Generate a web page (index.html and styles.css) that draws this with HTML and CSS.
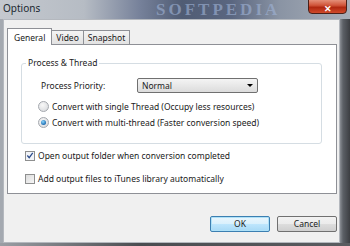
FILE: index.html
```html
<!DOCTYPE html>
<html lang="en">
<head>
    <meta charset="UTF-8">
    <title>Options</title>
    <link rel="stylesheet" href="styles.css">
</head>
<body>
    <div class="window">
        <div class="titlebar">
            <span class="title">Options</span>
            <span class="brand">SOFTPEDIA</span>
            <div class="close">&#x2715;</div>
        </div>
        <div class="frame-mid">
            <div class="frame-left"></div>
            <div class="client">
                <div class="tabs">
                    <div class="tab active">General</div>
                    <div class="tab">Video</div>
                    <div class="tab">Snapshot</div>
                </div>
                <div class="panel">
                    <div class="group">
                        <div class="legend">Process &amp; Thread</div>
                        <div class="row priority">
                            <span class="label">Process Priority:</span>
                            <div class="select">
                                <span>Normal</span>
                                <span class="arrow"></span>
                            </div>
                        </div>
                        <div class="row option">
                            <span class="radio"></span>
                            <span>Convert with single Thread (Occupy less resources)</span>
                        </div>
                        <div class="row option">
                            <span class="radio checked"></span>
                            <span>Convert with multi-thread (Faster conversion speed)</span>
                        </div>
                    </div>
                    <div class="row check-row">
                        <span class="checkbox checked">
                            <svg width="9" height="9" viewBox="0 0 9 9"><path d="M1.5 4.5 L3.6 7 L7.6 1.5" fill="none" stroke="#2a4a8a" stroke-width="1.4"/></svg>
                        </span>
                        <span>Open output folder when conversion completed</span>
                    </div>
                    <div class="row check-row">
                        <span class="checkbox"></span>
                        <span>Add output files to iTunes library automatically</span>
                    </div>
                </div>
                <div class="buttons">
                    <div class="btn default">OK</div>
                    <div class="btn">Cancel</div>
                </div>
            </div>
            <div class="frame-right"></div>
        </div>
        <div class="frame-bottom"></div>
    </div>
</body>
</html>
```

FILE: styles.css
```css
body {
    margin: 0;
    padding: 0;
    width: 350px;
    height: 246px;
    overflow: hidden;
    font-family: 'Noto Sans', 'Open Sans', sans-serif;
    font-size: 8.5px;
    color: #1a1a1a;
}
.window {
    width: 350px;
    height: 246px;
    display: flex;
    flex-direction: column;
    background: #6c7480;
}
.titlebar {
    position: relative;
    height: 19px;
    flex: none;
    display: flex;
    align-items: center;
    background: linear-gradient(90deg, #c4c8ce 0, #b6bcc4 24%, #76819a 40%, #505c74 52%, #5a6680 66%, #8a94a4 80%, #a8aeb8 100%);
}
.title {
    padding-left: 3px;
    font-size: 10px;
    color: #202830;
    margin-top: -4px;
}
.brand {
    position: absolute;
    left: 156px;
    top: 1px;
    font-family: 'Liberation Serif', serif;
    font-weight: bold;
    font-size: 17px;
    line-height: 17px;
    letter-spacing: 3px;
    color: rgba(160, 180, 215, 0.6);
}
.close {
    position: absolute;
    left: 308px;
    top: -2px;
    width: 39px;
    height: 16px;
    border: 1px solid #4a2018;
    border-radius: 0 0 4px 4px;
    background: linear-gradient(#e89a84 0, #d0553a 45%, #b02810 60%, #d04a2a 100%);
    color: #fff;
    font-size: 9px;
    font-weight: bold;
    text-align: center;
    line-height: 19px;
    box-sizing: border-box;
}
.frame-mid {
    flex: 1;
    display: flex;
}
.frame-left {
    width: 3px;
    background: #a4a9b0;
}
.frame-right {
    width: 10px;
    background: linear-gradient(90deg, #8a8e94 0, #5c6066 30%, #3c3e42 100%);
}
.frame-bottom {
    height: 3px;
    flex: none;
    background: linear-gradient(90deg, #9a9ea4, #4a4c50 40%, #5a5c60);
}
.client {
    flex: 1;
    background: #f0f0f0;
    border: 1px solid #b4b8be;
    box-sizing: border-box;
    padding: 7px 1px 0 3px;
    display: flex;
    flex-direction: column;
}
.tabs {
    display: flex;
    align-items: flex-end;
    height: 17px;
    position: relative;
    z-index: 1;
}
.tab {
    height: 14px;
    padding: 0 4px;
    border: 1px solid #8e9096;
    border-bottom: none;
    border-left: none;
    background: linear-gradient(#f4f4f4, #e2e2e2);
    font-size: 8.5px;
    line-height: 14px;
    box-sizing: border-box;
}
.tab.active {
    height: 17px;
    padding: 0 6px;
    background: #fff;
    border-left: 1px solid #8e9096;
    margin-bottom: -1px;
    line-height: 17px;
}
.panel {
    position: relative;
    height: 150px;
    background: #fff;
    border: 1px solid #8e9096;
    box-sizing: border-box;
    padding: 18px 14px 0 13px;
    margin-right: 1px;
}
.group {
    position: relative;
    border: 1px solid #d5dde3;
    border-radius: 3px;
    height: 81px;
    box-sizing: border-box;
    padding: 13px 0 0 16px;
}
.legend {
    position: absolute;
    top: -7px;
    left: 4px;
    padding: 0 2px;
    background: #fff;
    line-height: 12px;
}
.row {
    display: flex;
    align-items: center;
    gap: 3px;
}
.priority {
    height: 16px;
    padding-left: 3px;
    margin-bottom: 5px;
}
.priority .label {
    width: 93px;
}
.select {
    width: 121px;
    height: 15px;
    box-sizing: border-box;
    border: 1px solid #707070;
    border-radius: 2px;
    background: linear-gradient(#f4f4f4, #dcdcdc);
    display: flex;
    align-items: center;
    justify-content: space-between;
    padding: 0 4px;
}
.arrow {
    width: 0;
    height: 0;
    border-left: 3px solid transparent;
    border-right: 3px solid transparent;
    border-top: 3px solid #000;
}
.option {
    height: 16px;
}
.radio {
    width: 11px;
    height: 11px;
    box-sizing: border-box;
    border-radius: 50%;
    border: 1px solid #a4a8ae;
    background: radial-gradient(circle at 40% 35%, #f8f8f8, #d4d6da);
    position: relative;
}
.radio.checked::after {
    content: "";
    position: absolute;
    left: 2px;
    top: 2px;
    width: 5px;
    height: 5px;
    border-radius: 50%;
    background: radial-gradient(circle at 40% 35%, #8ed8ff, #1c6bb0 70%);
}
.check-row {
    height: 23px;
    padding-left: 4px;
}
.check-row:first-of-type {
    margin-top: 3px;
}
.checkbox {
    width: 10px;
    height: 10px;
    box-sizing: border-box;
    border: 1px solid #8e8f8f;
    background: linear-gradient(135deg, #dcdcdc, #f6f6f6);
    display: flex;
    align-items: center;
    justify-content: center;
}
.checkbox.checked {
    background: #f2f4f8;
}
.buttons {
    display: flex;
    justify-content: flex-end;
    gap: 7px;
    margin-top: 22px;
    padding-right: 1px;
}
.btn {
    width: 60px;
    height: 16px;
    box-sizing: border-box;
    border: 1px solid #707070;
    border-radius: 2px;
    background: linear-gradient(#f2f2f2 0, #ebebeb 50%, #dddddd 51%, #cfcfcf 100%);
    text-align: center;
    line-height: 14px;
}
.btn.default {
    border-color: #3c7fb1;
    background: linear-gradient(#eaf6fd 0, #d9f0fc 50%, #bee6fd 51%, #a7d9f5 100%);
    box-shadow: inset 0 0 0 1px #aee1f8;
}
```
